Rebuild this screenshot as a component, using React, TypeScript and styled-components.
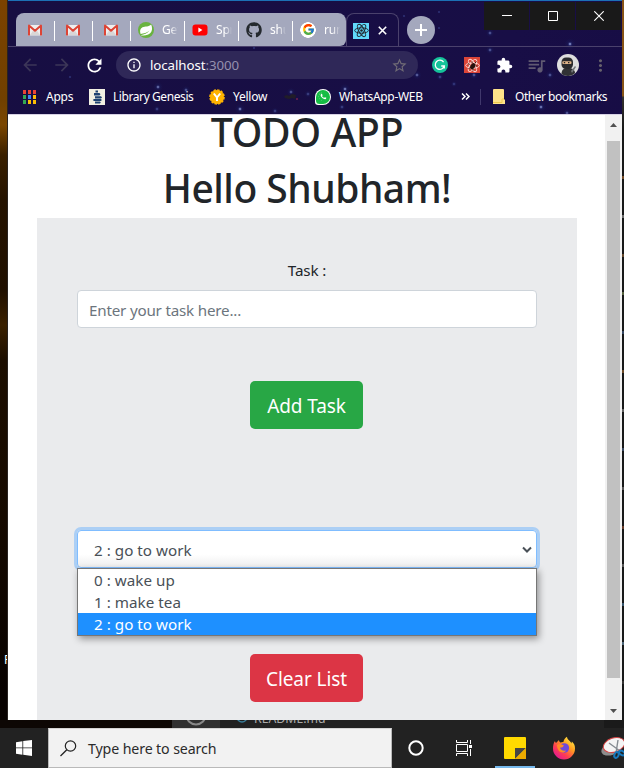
import React from "react";
import styled, { createGlobalStyle, css } from "styled-components";
import {
  MdArrowBack,
  MdArrowForward,
  MdRefresh,
  MdInfoOutline,
  MdStarBorder,
  MdExtension,
  MdQueueMusic,
  MdMoreVert,
} from "react-icons/md";
import { FaGithub, FaWhatsapp } from "react-icons/fa";
import { FcGoogle } from "react-icons/fc";

const GlobalStyle = createGlobalStyle`
  *, *::before, *::after { box-sizing: border-box; }
  html, body { margin: 0; padding: 0; overflow: hidden; }
  body { font-family: "Noto Sans", "Open Sans", sans-serif; }
  svg { display: block; flex: none; }
`;

const stars: [number, number, number][] = [
  [150, 87, 1.2], [178, 90, 1], [149, 109, 0.8], [232, 109, 1.3], [267, 111, 0.8], [283, 92, 1],
  [300, 94, 0.8], [337, 89, 1.3], [334, 107, 0.8], [482, 33, 1], [482, 50, 1], [562, 44, 1.4],
  [409, 75, 1.1], [432, 77, 0.8], [466, 75, 1], [446, 84, 0.7], [542, 75, 1], [533, 107, 1.3],
  [559, 113, 1], [431, 12, 0.4], [431, 28, 0.4], [62, 77, 0.4], [246, 48, 0.4], [396, 16, 0.4],
];

const starField = stars
  .map(([x, y, r]) => `radial-gradient(circle at ${x}px ${y}px, rgba(175,190,240,${Math.min(1, r * 0.75)}) 0, rgba(85,105,190,.4) ${r}px, rgba(30,60,140,.14) ${r + 1}px, transparent ${r * 4}px)`)
  .join(",");

const Screen = styled.div`
  width: 624px;
  height: 768px;
  overflow: hidden;
  display: grid;
  grid-template: 720px 8px 40px / 8px 614px 2px;
  background: #1a1a1a;
`;

const Wallpaper = styled.div`
  background: linear-gradient(#7c4200 0, #704000 100px, #7a4600 125px, #3a2000 155px, #251300 200px, #201000 290px, #3b2100 325px, #1c0e00 360px, #160a00 520px, #080200 690px);
  border-right: 1px solid #292320;
  display: flex;
  align-items: flex-end;
  padding: 0 0 52px 4px;
  overflow: hidden;
  color: #fff;
  font-size: 12px;
  line-height: 16px;
`;

const EditorEdge = styled.div`
  background: linear-gradient(#875315 0, #875315 96px, #33312e 97px, #171818 130px);
  display: flex;
  flex-direction: column;
  justify-content: space-evenly;
  padding-top: 140px;
`;

const EdgeMark = styled.i<{ $c: string }>`
  height: 3px;
  background: ${(p) => p.$c};
  opacity: 0.65;
`;

const Browser = styled.section`
  display: flex;
  flex-direction: column;
  min-width: 0;
  overflow: hidden;
  background: ${starField}, linear-gradient(115deg, #170e42, #180e46 55%, #150a43);
`;

const TitleBar = styled.header`
  height: 47px;
  display: flex;
  align-items: flex-start;
  border-top: 1px solid #1c70b5;
  border-bottom: 1px solid #4a416c;
  padding-left: 8px;
`;

const TabGroup = styled.div`
  height: 33px;
  margin-top: 12px;
  display: flex;
  background: #a4a8bd;
  border-radius: 8px 8px 6px 0;
`;

const Tab = styled.div<{ $w: number }>`
  width: ${(p) => p.$w}px;
  display: flex;
  align-items: center;
  padding-left: ${(p) => (p.$w < 45 ? p.$w - 27 : 7)}px;
  background: linear-gradient(#fff, #fff) right 8px / 1px 20px no-repeat;
  &:last-child { background: none; }
`;

const TabText = styled.span`
  width: 17px;
  margin-left: 8px;
  overflow: hidden;
  white-space: nowrap;
  font-size: 12px;
  line-height: 18px;
  letter-spacing: -0.2px;
  color: #fff;
  mask-image: linear-gradient(90deg, #000 50%, transparent 95%);
`;

const ActiveTab = styled.div`
  width: 53px;
  height: 34px;
  margin-top: 12px;
  border: 1px solid #4a416c;
  border-bottom: 0;
  border-radius: 8px 8px 0 0;
  display: flex;
  align-items: center;
  gap: 9px;
  padding-left: 6px;
`;

const NewTab = styled.div`
  width: 28px;
  height: 28px;
  margin: 15px 0 0 8px;
  border-radius: 50%;
  background: #a4a8bd;
  display: grid;
  place-items: center;
`;

const Controls = styled.div`
  margin-left: auto;
  margin-right: 1px;
  margin-top: 1px;
  display: flex;
  gap: 1px;
`;

const ControlButton = styled.div`
  width: 45px;
  height: 28px;
  background: #191919;
  display: grid;
  place-items: center;
`;

const Toolbar = styled.div`
  height: 36px;
  display: flex;
  align-items: center;
  padding-left: 12px;
`;

const Tool = styled.div<{ $w?: number; $c?: string }>`
  width: ${(p) => p.$w ?? 32}px;
  flex: none;
  display: grid;
  place-items: center;
  color: ${(p) => p.$c ?? "#fff"};
`;

const Address = styled.div`
  width: 302px;
  height: 28px;
  margin: 0 6px 0 12px;
  border-radius: 14px;
  background: #2f2858;
  display: flex;
  align-items: center;
  padding: 0 10px 0 10px;
  color: #fff;
  font-size: 13.3px;
  letter-spacing: -0.08px;
  & > span { margin-left: 8px; flex: 1; }
  & > span > em { font-style: normal; color: #9690ad; }
`;

const Bookmarks = styled.nav`
  height: 32px;
  border-bottom: 1px solid #d7d2e4;
  display: flex;
  align-items: center;
  padding: 0 0 4px 15px;
  color: #fff;
`;

const Bookmark = styled.div<{ $w: number; $gap?: number; $ls?: number }>`
  width: ${(p) => p.$w}px;
  flex: none;
  display: flex;
  align-items: center;
  gap: ${(p) => p.$gap ?? 8}px;
  white-space: nowrap;
  font-size: 12px;
  line-height: 18px;
  letter-spacing: ${(p) => p.$ls ?? -0.25}px;
`;

const BookmarkDivider = styled.i`
  width: 1px;
  height: 16px;
  margin-right: 12px;
  background: #40386c;
`;

const Viewport = styled.div`
  height: 605px;
  display: flex;
  background: #fff;
`;

const Page = styled.main`
  width: 597px;
  padding: 0 28px 0 29px;
  overflow: hidden;
`;

const Heading = styled.h1<{ $top?: number; $ls: number }>`
  margin: ${(p) => p.$top ?? 0}px 0 8px;
  height: 48px;
  line-height: 51px;
  text-align: center;
  font-size: 39px;
  font-weight: 500;
  letter-spacing: ${(p) => p.$ls}px;
  color: #212529;
  white-space: nowrap;
`;

const Panel = styled.div`
  height: 560px;
  padding: 40px 40px 0;
  background: #eaebed;
  display: flex;
  flex-direction: column;
  align-items: center;
`;

const FieldLabel = styled.label`
  height: 24px;
  margin-bottom: 8px;
  font-size: 15.2px;
  line-height: 25px;
  letter-spacing: -0.15px;
  color: #212529;
`;

const controlBox = css`
  width: 460px;
  height: 38px;
  border-radius: 4px;
  background: #fff;
  font-size: 15.2px;
`;

const TaskInput = styled.input`
  ${controlBox}
  border: 1px solid #ced4da;
  padding: 2px 12px 0 11px;
  font-family: inherit;
  letter-spacing: -0.2px;
  &::placeholder { color: #6c757d; opacity: 1; }
`;

const Button = styled.button<{ $bg: string; $top: number; $ls: number }>`
  width: 113px;
  height: 48px;
  margin: ${(p) => p.$top}px 1px 0 0;
  padding: 2px 0 0;
  border: 0;
  border-radius: 5px;
  background: ${(p) => p.$bg};
  color: #fff;
  font: 400 19px/30px "Noto Sans", sans-serif;
  letter-spacing: ${(p) => p.$ls}px;
  white-space: nowrap;
`;

const Select = styled.div`
  ${controlBox}
  position: relative;
  margin-top: 101px;
  border: 1px solid #80bdff;
  box-shadow: 0 0 0 3px #accff5;
  background: linear-gradient(#fff 65%, #eee);
  display: flex;
  align-items: center;
  justify-content: space-between;
  padding: 2px 4px 0 16px;
  color: #495057;
  letter-spacing: 0.03px;
`;

const Options = styled.ul`
  position: absolute;
  left: -1px;
  top: 37px;
  width: 460px;
  height: 68px;
  margin: 0;
  padding: 0;
  list-style: none;
  border: 1px solid #767676;
  background: #fff;
  box-shadow: 2px 3px 7px rgba(0, 0, 0, 0.38);
`;

const Option = styled.li<{ $on?: boolean }>`
  height: 22px;
  padding-left: 16px;
  line-height: 23px;
  background: ${(p) => (p.$on ? "#1e90ff" : "#fff")};
  color: ${(p) => (p.$on ? "#fff" : "#495057")};
`;

const Scrollbar = styled.div`
  width: 17px;
  background: #f1f1f1;
  display: flex;
  flex-direction: column;
  align-items: center;
`;

const ScrollArrow = styled.div<{ $h: number; $shift: number }>`
  height: ${(p) => p.$h}px;
  padding-top: ${(p) => p.$shift}px;
`;

const Thumb = styled.div`
  width: 13px;
  height: 537px;
  background: #c1c1c1;
`;

const Gap = styled.div`
  grid-column: 1 / -1;
  display: flex;
  overflow: hidden;
  background: #1a1a1a;
`;

const GapPart = styled.div<{ $w: number; $bg: string }>`
  width: ${(p) => p.$w}px;
  height: 8px;
  overflow: hidden;
  background: ${(p) => p.$bg};
  display: flex;
  align-items: flex-end;
`;

const FileName = styled.span`
  height: 8px;
  margin-left: 6px;
  padding-bottom: 3px;
  display: flex;
  align-items: flex-end;
  font-size: 12.3px;
  line-height: 13px;
  color: #aaa;
`;

const Taskbar = styled.footer`
  grid-column: 1 / -1;
  display: flex;
  align-items: center;
  overflow: hidden;
  background: #222;
`;

const Start = styled.div`
  width: 48px;
  flex: none;
  padding-left: 16px;
`;

const Search = styled.div`
  width: 344px;
  flex: none;
  height: 40px;
  background: #f2f2f2;
  border: 1px solid #b9b9b9;
  border-top-color: #d4d4d4;
  display: flex;
  align-items: center;
  gap: 11px;
  padding-left: 11px;
  font-size: 14.2px;
  letter-spacing: -0.12px;
  color: #2b2b2b;
`;

const TaskItem = styled.div<{ $w: number; $on?: boolean }>`
  width: ${(p) => p.$w}px;
  height: 40px;
  flex: none;
  display: grid;
  place-items: center;
  box-shadow: ${(p) => (p.$on ? "inset 0 -2px #76b9ed" : "none")};
`;

const Gmail = () => (
  <svg width="14" height="12" viewBox="0 0 14 12">
    <path d="M0 1h14v10.5H0z" fill="#efeeee" />
    <path d="M2 11 5.5 6 7 7.2 8.5 6l3.5 5z" fill="#d9d6d6" />
    <path d="M1 11.5V1.6L7 6.8l6-5.2v9.9" fill="none" stroke="#dc4436" strokeWidth="2" strokeLinejoin="round" />
  </svg>
);

const Spring = () => (
  <svg width="16" height="16" viewBox="0 0 16 16">
    <circle cx="8" cy="8" r="8" fill="#69b33f" />
    <path d="M13.200 2.500c1.200 3 1.300 6.300-.8 8.600-2 2.200-5.600 2.600-9.900 2.100 4-.5 6.500-1.400 9-4.600-2.800 2.300-5.600 3-8.900 3.300-1-2.700-.6-5.400 1.900-6.600 2.700-1.200 6.200-.3 8.700-2.800z" fill="#fff" />
  </svg>
);

const Youtube = () => (
  <svg width="16" height="12" viewBox="0 0 16 12">
    <rect x=".5" y=".5" width="15" height="11" rx="3" fill="#f00" />
    <path d="M6.4 3.6 10.4 6l-4 2.4z" fill="#fff" />
  </svg>
);

const ReactMark = ({ color, size = 14 }: { color: string; size?: number }) => (
  <svg width={size} height={size} viewBox="-7 -7 14 14" fill="none" stroke={color} strokeWidth=".9">
    <g transform="rotate(0)">
      <ellipse rx="6.4" ry="2.5" />
      <ellipse rx="6.4" ry="2.5" transform="rotate(60)" />
      <ellipse rx="6.4" ry="2.5" transform="rotate(120)" />
    </g>
    <circle r="1.2" fill={color} stroke="none" />
  </svg>
);

const IconTile = styled.div<{ $bg: string }>`
  width: 16px;
  height: 16px;
  flex: none;
  background: ${(p) => p.$bg};
  display: grid;
  place-items: center;
  & > * { grid-area: 1 / 1; }
`;

const Stroke = ({ d, size, w = 1, c = "#fff" }: { d: string; size: number; w?: number; c?: string }) => (
  <svg width={size} height={size} viewBox={`0 0 ${size} ${size}`}>
    <path d={d} fill="none" stroke={c} strokeWidth={w} />
  </svg>
);

const Grammarly = () => (
  <svg width="16" height="16" viewBox="0 0 16 16">
    <circle cx="8" cy="8" r="8" fill="#15c39a" />
    <path d="M11.6 5.1A4.6 4.6 0 1 0 12.3 9H9.2M12.3 8.6v3" fill="none" stroke="#fff" strokeWidth="1.3" />
  </svg>
);

const Bug = () => (
  <svg width="11" height="11" viewBox="0 0 11 11">
    <path d="M2.500 4.500 1 3.500M3 7.500 1.500 9M6 9v1.500M8 3l1.500-1.500M9 6h1.500M5 3V1.500" stroke="#29100c" strokeWidth=".9" />
    <ellipse cx="6" cy="6.300" rx="2.300" ry="3.300" fill="#29100c" transform="rotate(35 6 6)" />
  </svg>
);

const Ninja = () => (
  <svg width="22" height="22" viewBox="0 0 22 22">
    <circle cx="11" cy="11" r="11" fill="#dedede" />
    <path d="M4.5 20c0-4 2-6 6.5-6s7 2 7 5.2A11 11 0 0 1 4.5 20z" fill="#303134" />
    <path d="m14 17 4-5 1 1-4 6z" fill="#73777b" />
    <rect x="4.5" y="3.5" width="11.5" height="11.5" rx="4.5" fill="#292a2d" />
    <rect x="5.3" y="7.300" width="9.2" height="2.800" rx="1" fill="#dfb489" />
    <path d="M6.800 8.700h1.400M11 8.700h1.400" stroke="#222" strokeWidth="1.2" />
  </svg>
);

const Apps = () => {
  const colors = ["#ea4335", "#ea4335", "#ea4335", "#34a853", "#4285f4", "#fbbc04", "#34a853", "#fbbc04", "#fbbc04"];
  return (
    <svg width="13" height="14" viewBox="0 0 13 14">
      {colors.map((c, i) => <rect key={i} x={(i % 3) * 5} y={Math.floor(i / 3) * 5} width="3" height="4" fill={c} />)}
    </svg>
  );
};

const Library = () => (
  <svg width="16" height="16" viewBox="0 0 16 16">
    <path d="M0 0h16v16H0z" fill="#f2f0e3" />
    <path d="M6.500 1.500h2.500v2H6.500zM5 4h5.500l1 1.300-1 1.200H5zM6 7.200h6l1 1.300-1 1H6zM5 10h7l.8 1-.8 1H5l-1.200-1zM6 12.500h5l.8 1-.8 1H6z" fill="#1e4272" />
  </svg>
);

const Yellow = () => (
  <svg width="16" height="16" viewBox="0 0 16 16">
    <circle cx="8" cy="8" r="7" fill="#ffb300" stroke="#ffb300" strokeWidth="1.6" strokeDasharray="2.4 1.26" />
    <path d="m4.8 4.5 3.2 4 3.2-4M8 8v4" fill="none" stroke="#fff" strokeWidth="2" />
  </svg>
);

const Smudge = () => (
  <svg width="15" height="8" viewBox="0 0 15 8">
    <path d="M0 3l3-1 2 1 3-2 4 1-1 4-3-1-3 1-4-1z" fill="#211d28" />
    <circle cx="13" cy="6" r="1" fill="#72204f" />
  </svg>
);

const Whats = styled.div`
  width: 16px;
  height: 16px;
  border-radius: 50% 50% 50% 20%;
  background: #fff;
  display: grid;
  place-items: center;
`;

const WhatsFill = styled.div`
  width: 14px;
  height: 14px;
  border-radius: 50% 50% 50% 25%;
  background: #16bd45;
  color: #fff;
  display: grid;
  place-items: center;
  svg { clip-path: circle(4.200px); }
`;

const Folder = () => (
  <svg width="12" height="15" viewBox="0 0 12 15">
    <path d="M0 1q0-1 1-1h9q1 0 1 1v9l1 1v4H0z" fill="#ffe38a" />
    <path d="M0 13.5h9V10h2" fill="none" stroke="#efc94f" />
  </svg>
);

const Firefox = () => (
  <svg width="24" height="24" viewBox="0 0 24 24">
    <defs>
      <linearGradient id="flame" x1="1" y1="0" x2=".2" y2="1">
        <stop offset=".1" stopColor="#fff044" />
        <stop offset=".42" stopColor="#ff9a21" />
        <stop offset=".7" stopColor="#ff3d52" />
        <stop offset="1" stopColor="#dd159b" />
      </linearGradient>
    </defs>
    <path d="M3 5c.2 1 .5 1.4 1 2l3-3c0 1.2.5 2 1.4 2.5 1-.5 2-.7 3-.6.3-2 1.6-4.2 3.6-5.2 0 2 1.2 2.8 2.7 4.3 1 1 1.4 1.8 1.6 2.6l.6-2C22.4 7.8 23 10 23 12.500a11 11 0 0 1-22 0C1 9.700 1.500 7 3 5z" fill="url(#flame)" />
    <circle cx="12.300" cy="12" r="4.800" fill="#7048dc" />
    <path d="M5 9c3-2 4.500-.8 7 .4l-1.500 1.800-2.500.6c.6 2.200 3 3.500 6 2.600-2 3.800-9 2.500-9-5.400z" fill="#ff8b26" />
  </svg>
);

const Snip = () => (
  <svg width="24" height="24" viewBox="0 0 24 24">
    <ellipse cx="10" cy="13" rx="10" ry="6" fill="#8d8d8d" transform="rotate(-20 10 13)" />
    <ellipse cx="13" cy="9" rx="11" ry="7" fill="#f4f4f4" stroke="#d64545" transform="rotate(-18 13 9)" />
    <path d="m8 7 11 8M17 4l-2 13" stroke="#858b91" strokeWidth="1.400" />
    <g fill="none" stroke="#1678bd" strokeWidth="2">
      <ellipse cx="15.500" cy="19" rx="2" ry="3" transform="rotate(25 15.500 19)" />
      <ellipse cx="21" cy="17" rx="3" ry="2" transform="rotate(30 21 17)" />
    </g>
  </svg>
);

const tabs = [
  { w: 39, icon: <Gmail /> },
  { w: 38, icon: <Gmail /> },
  { w: 38, icon: <Gmail /> },
  { w: 54, icon: <Spring />, text: "Get" },
  { w: 54, icon: <Youtube />, text: "Spri" },
  { w: 54, icon: <FaGithub size={16} color="#24292e" />, text: "shub" },
  { w: 53, icon: <IconTile $bg="radial-gradient(circle, #fff 7.500px, transparent 8px)"><FcGoogle size={13} /></IconTile>, text: "run" },
];

const tasks = ["0 : wake up", "1 : make tea", "2 : go to work"];
const edgeMarks = ["#a3662f", "#999", "#8d6235", "#788b54", "#435f88", "#986630", "#888", "#4a6285", "#777", "#8d4b31", "#777", "#46769b", "#6a91ac", "#444"];

export default function App() {
  return (
    <>
      <GlobalStyle />
      <Screen>
        <Wallpaper>F</Wallpaper>
        <Browser>
          <TitleBar>
            <TabGroup>
              {tabs.map((t, i) => (
                <Tab key={i} $w={t.w}>
                  {t.icon}
                  {t.text && <TabText>{t.text}</TabText>}
                </Tab>
              ))}
            </TabGroup>
            <ActiveTab>
              <IconTile $bg="#61dafb"><ReactMark color="#20232a" size={15} /></IconTile>
              <Stroke size={9} w={1.6} d="M.8.8l7.400 7.400M8.200.8.8 8.200" />
            </ActiveTab>
            <NewTab><Stroke size={12} w={2} d="M6 0v12M0 6h12" /></NewTab>
            <Controls>
              <ControlButton><Stroke size={10} d="M0 4.500h10" /></ControlButton>
              <ControlButton><Stroke size={10} d="M.5.5h9v9h-9z" /></ControlButton>
              <ControlButton><Stroke size={10} w={1.100} d="M.3.3l9.400 9.400M9.700.3.3 9.700" /></ControlButton>
            </Controls>
          </TitleBar>
          <Toolbar>
            <Tool $w={20} $c="#3c3658"><MdArrowBack size={20} /></Tool>
            <Tool $w={44} $c="#3c3658"><MdArrowForward size={20} /></Tool>
            <Tool $w={20}><MdRefresh size={21} /></Tool>
            <Address>
              <MdInfoOutline size={16} />
              <span>localhost<em>:3000</em></span>
              <MdStarBorder size={17} color="#706b75" />
            </Address>
            <Tool><Grammarly /></Tool>
            <Tool><IconTile $bg="#dc4538"><ReactMark color="#ffd9d5" size={15} /><Bug /></IconTile></Tool>
            <Tool><MdExtension size={17} /></Tool>
            <Tool $c="#605a72"><MdQueueMusic size={21} /></Tool>
            <Tool><Ninja /></Tool>
            <Tool $c="#66616c"><MdMoreVert size={19} /></Tool>
          </Toolbar>
          <Bookmarks>
            <Bookmark $w={66} $gap={10}><Apps />Apps</Bookmark>
            <Bookmark $w={120} $ls={-0.42}><Library />Library Genesis</Bookmark>
            <Bookmark $w={75}><Yellow />Yellow</Bookmark>
            <Bookmark $w={31}><Smudge /></Bookmark>
            <Bookmark $w={146} $ls={-0.3}><Whats><WhatsFill><FaWhatsapp size={13} /></WhatsFill></Whats>WhatsApp-WEB</Bookmark>
            <Bookmark $w={19}><Stroke size={9} w={1.500} d="M1 1.500l3 3-3 3M5 1.500l3 3-3 3" /></Bookmark>
            <BookmarkDivider />
            <Bookmark $w={120} $gap={10} $ls={-0.48}><Folder />Other bookmarks</Bookmark>
          </Bookmarks>
          <Viewport>
            <Page>
              <Heading $top={-9} $ls={-0.2}>TODO APP</Heading>
              <Heading $ls={-0.5}>Hello Shubham!</Heading>
              <Panel>
                <FieldLabel htmlFor="task">Task :</FieldLabel>
                <TaskInput id="task" placeholder="Enter your task here..." />
                <Button $bg="#28a745" $top={53} $ls={-0.1}>Add Task</Button>
                <Select>
                  {tasks[2]}
                  <Stroke size={10} w={2} c="#495057" d="M1 2.500l4 4 4-4" />
                  <Options>
                    {tasks.map((t, i) => <Option key={t} $on={i === 2}>{t}</Option>)}
                  </Options>
                </Select>
                <Button $bg="#dc3545" $top={86} $ls={-0.1}>Clear List</Button>
              </Panel>
            </Page>
            <Scrollbar>
              <ScrollArrow $h={26} $shift={8}>
                <svg width="7" height="4" viewBox="0 0 7 4"><path d="M0 4 3.500 0 7 4z" fill="#505050" /></svg>
              </ScrollArrow>
              <Thumb />
              <ScrollArrow $h={42} $shift={31}>
                <svg width="7" height="4" viewBox="0 0 7 4"><path d="M0 0h7l-3.500 4z" fill="#505050" /></svg>
              </ScrollArrow>
            </Scrollbar>
          </Viewport>
        </Browser>
        <EditorEdge>{edgeMarks.map((c, i) => <EdgeMark key={i} $c={c} />)}</EditorEdge>
        <Gap>
          <GapPart $w={172} $bg="#0d0704" />
          <GapPart $w={48} $bg="#303030">
            <svg width="48" height="8" viewBox="0 0 48 8"><circle cx="24" cy="-5" r="9.500" fill="none" stroke="#888" strokeWidth="2" /></svg>
          </GapPart>
          <GapPart $w={384} $bg="#222">
            <svg width="28" height="8" viewBox="0 0 28 8"><circle cx="22" cy="-3" r="5" fill="none" stroke="#397c98" strokeWidth="1.300" /></svg>
            <FileName>README.md</FileName>
          </GapPart>
        </Gap>
        <Taskbar>
          <Start>
            <svg width="16" height="16" viewBox="0 0 16 16"><path d="M0 2.200 6.400 1.200v6.300H0zM7.200 1.100 16 0v7.500H7.200zM0 8.300h6.400v6.400L0 13.800zM7.200 8.300H16V16l-8.800-1.200z" fill="#fff" /></svg>
          </Start>
          <Search>
            <svg width="17" height="17" viewBox="0 0 17 17"><circle cx="10.500" cy="6" r="5.200" fill="none" stroke="#222" strokeWidth="1.200" /><path d="M6.800 9.700.5 16" stroke="#222" strokeWidth="1.300" /></svg>
            Type here to search
          </Search>
          <TaskItem $w={48}>
            <svg width="16" height="16" viewBox="0 0 16 16"><circle cx="8" cy="8" r="6.700" fill="none" stroke="#fff" strokeWidth="2" /></svg>
          </TaskItem>
          <TaskItem $w={48}>
            <svg width="17" height="16" viewBox="0 0 17 16" fill="none" stroke="#fff">
              <path d="M.5 4.500h11v7H.5zM.5 0v2.500h11V0M.5 16v-2.500h11V16M14.500 0v4M14.500 9v7" />
              <path d="M13 5h3v3h-3z" fill="#fff" stroke="none" />
            </svg>
          </TaskItem>
          <TaskItem $w={7} />
          <TaskItem $w={40} $on>
            <svg width="22" height="22" viewBox="0 0 22 22"><rect width="22" height="22" rx="1" fill="#ffd900" /><path d="M11 11h11L11 22z" fill="#454545" /><path d="M22 11v11H11z" fill="#edab00" /></svg>
          </TaskItem>
          <TaskItem $w={58}><Firefox /></TaskItem>
          <TaskItem $w={40}><Snip /></TaskItem>
        </Taskbar>
      </Screen>
    </>
  );
}
